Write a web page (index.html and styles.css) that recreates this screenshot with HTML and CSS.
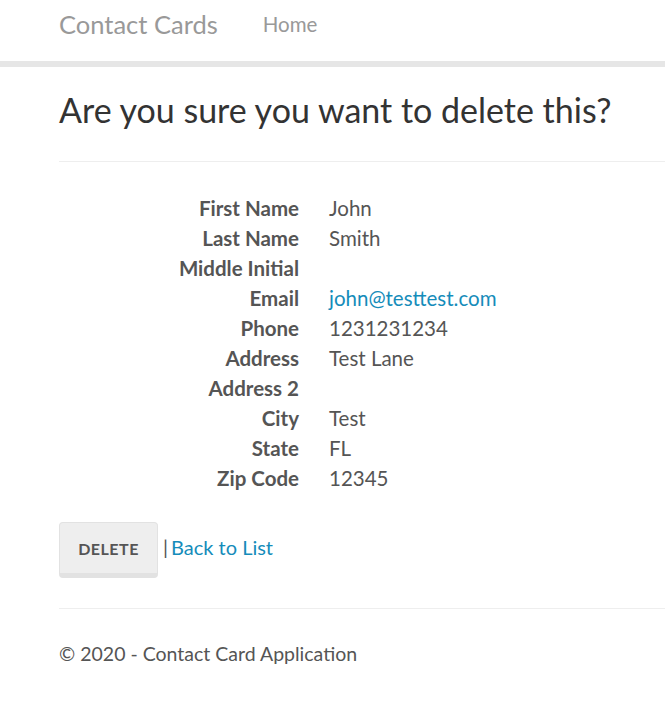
FILE: index.html
```html
<!DOCTYPE html>
<html>
<head>
<meta charset="utf-8">
<title>Delete - Contact Cards</title>
<link rel="stylesheet" href="styles.css">
</head>
<body>
<nav class="navbar">
  <div class="nav-inner">
    <a class="brand" href="#">Contact Cards</a>
    <a class="nav-link" href="#">Home</a>
  </div>
</nav>
<main class="container">
  <h2 class="title">Are you sure you want to delete this?</h2>
  <hr class="rule">
  <dl class="details">
    <dt>First Name</dt><dd>John</dd>
    <dt>Last Name</dt><dd>Smith</dd>
    <dt>Middle Initial</dt><dd></dd>
    <dt>Email</dt><dd><a href="#" class="link">john@testtest.com</a></dd>
    <dt>Phone</dt><dd>1231231234</dd>
    <dt>Address</dt><dd>Test Lane</dd>
    <dt>Address 2</dt><dd></dd>
    <dt>City</dt><dd>Test</dd>
    <dt>State</dt><dd>FL</dd>
    <dt>Zip Code</dt><dd>12345</dd>
  </dl>
  <form class="actions">
    <button type="button" class="btn">Delete</button>
    <span class="sep">|</span>
    <a href="#" class="link">Back to List</a>
  </form>
  <hr class="rule footer-rule">
  <footer class="footer">© 2020 - Contact Card Application</footer>
</main>
</body>
</html>
```
FILE: styles.css
```css
html, body {
  margin: 0;
  padding: 0;
  background: #fff;
}
body {
  font-family: Lato, "Open Sans", sans-serif;
  font-size: 20px;
  color: #555;
}
a { text-decoration: none; }
.navbar {
  height: 61px;
  border-bottom: 6px solid #e6e6e6;
}
.nav-inner {
  display: flex;
  align-items: center;
  height: 100%;
  padding: 0 0 14px 59px;
  box-sizing: border-box;
  gap: 45px;
}
.brand {
  font-size: 25.5px;
  color: #999;
}
.nav-link {
  font-size: 20.5px;
  color: #999;
}
.container {
  padding-left: 59px;
}
.title {
  margin: 21px 0 0;
  font-weight: 400;
  font-size: 34px;
  line-height: 44px;
  color: #333;
  white-space: nowrap;
}
.rule {
  margin: 29px 0 0;
  border: 0;
  border-top: 1px solid #eee;
}
.details {
  display: grid;
  grid-template-columns: 240px 1fr;
  column-gap: 30px;
  margin: 31px 0 0;
  line-height: 30px;
  font-size: 20.5px;
}
.details dt {
  font-weight: 700;
  text-align: right;
  white-space: nowrap;
}
.details dd {
  margin: 0;
  min-height: 30px;
}
.link { color: #158cba; }
.actions {
  display: flex;
  align-items: baseline;
  margin-top: 29px;
}
.btn {
  font-family: Lato, "Open Sans", sans-serif;
  font-weight: 700;
  font-size: 16px;
  letter-spacing: 0.5px;
  text-transform: uppercase;
  color: #555;
  background: #eee;
  border: 1px solid #e2e2e2;
  border-bottom: 5px solid #e2e2e2;
  border-radius: 4px;
  width: 99px;
  height: 56px;
  padding: 0;
}
.sep {
  margin: 0 3px 0 5px;
}
.footer-rule {
  margin-top: 30px;
}
.footer {
  margin-top: 33px;
  font-size: 19.5px;
}
```
